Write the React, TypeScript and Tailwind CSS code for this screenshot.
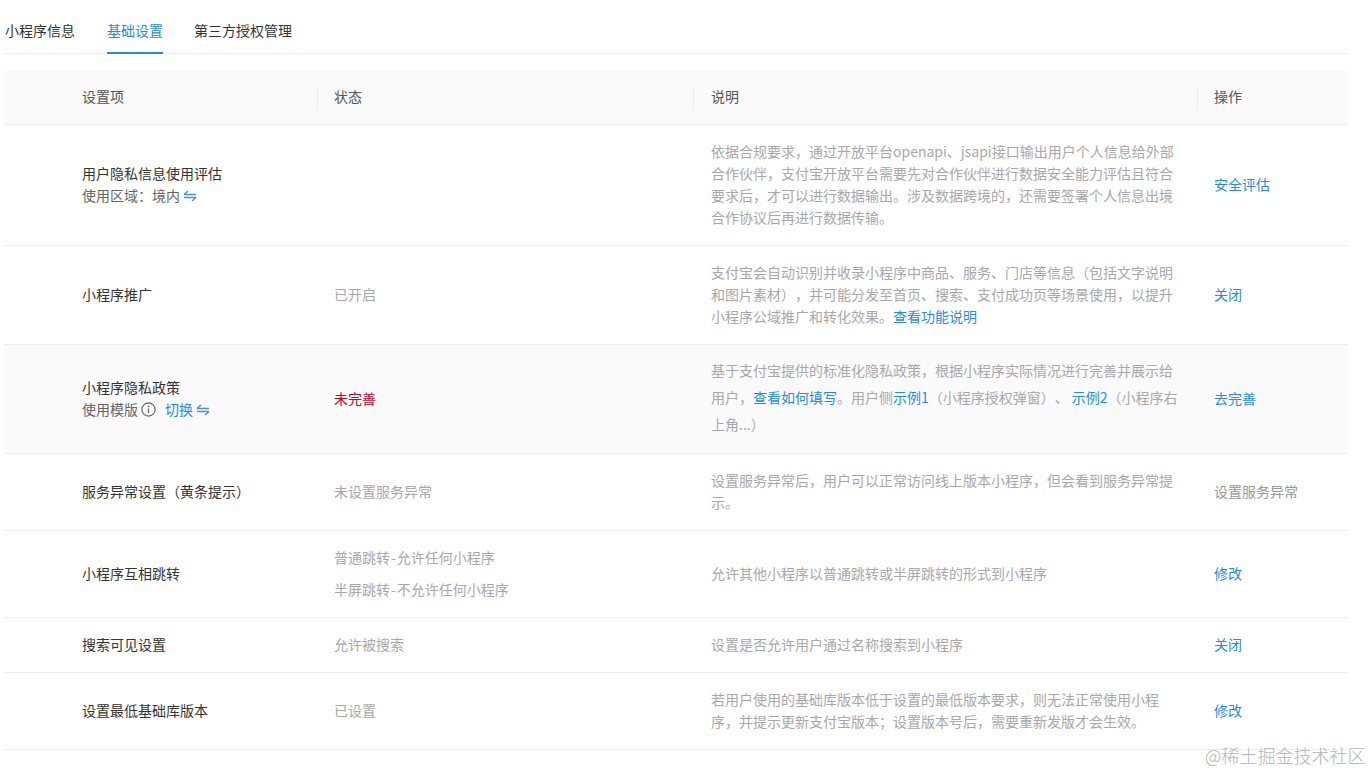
import React from "react";

function Swap() {
  return (
    <svg width="14" height="12" viewBox="0 0 14 12" fill="none" className="ml-[3px] inline-block align-[-1px]">
      <path d="M1 4.5H13M1 4.5L5 1M1 7.5H13M13 7.5L9 11" stroke="#4a90e2" strokeWidth="1.4" />
    </svg>
  );
}
function Info() {
  return (
    <svg width="15" height="15" viewBox="0 0 15 15" fill="none" className="ml-[3px] inline-block align-[-2px]">
      <circle cx="7.5" cy="7.5" r="6.6" stroke="#666" strokeWidth="1.2" />
      <path d="M7.5 6.5V11" stroke="#666" strokeWidth="1.3" />
      <circle cx="7.5" cy="4.4" r="0.9" fill="#666" />
    </svg>
  );
}
const A = ({ children }: { children: React.ReactNode }) => <span className="text-[#1f8ceb]">{children}</span>;

type Row = { h: string; bg?: boolean; name: React.ReactNode; status: React.ReactNode; desc: React.ReactNode; action: React.ReactNode };
const rows: Row[] = [
  {
    h: "h-[121px]",
    name: (
      <>
        <div className="leading-[22px] text-[#333]">用户隐私信息使用评估</div>
        <div className="leading-[22px] text-[#666]">使用区域：境内<Swap /></div>
      </>
    ),
    status: null,
    desc: "依据合规要求，通过开放平台openapi、jsapi接口输出用户个人信息给外部合作伙伴，支付宝开放平台需要先对合作伙伴进行数据安全能力评估且符合要求后，才可以进行数据输出。涉及数据跨境的，还需要签署个人信息出境合作协议后再进行数据传输。",
    action: <A>安全评估</A>,
  },
  {
    h: "h-[99px]",
    name: <span className="text-[#333]">小程序推广</span>,
    status: <span className="text-[#a8a8aa]">已开启</span>,
    desc: <>支付宝会自动识别并收录小程序中商品、服务、门店等信息（包括文字说明和图片素材），并可能分发至首页、搜索、支付成功页等场景使用，以提升小程序公域推广和转化效果。<A>查看功能说明</A></>,
    action: <A>关闭</A>,
  },
  {
    h: "h-[109px]",
    bg: true,
    name: (
      <>
        <div className="leading-[22px] text-[#333]">小程序隐私政策</div>
        <div className="leading-[22px] text-[#666]">使用模版<Info /><span className="ml-[9px] text-[#1f8ceb]">切换</span><Swap /></div>
      </>
    ),
    status: <span className="text-[#c4002b]">未完善</span>,
    desc: <div className="pb-[2px] leading-[27px]">基于支付宝提供的标准化隐私政策，根据小程序实际情况进行完善并展示给用户，<A>查看如何填写</A>。用户侧<A>示例1</A>（小程序授权弹窗）、<span className="ml-[3px]"><A>示例2</A></span>（小程序右上角...）</div>,
    action: <A>去完善</A>,
  },
  {
    h: "h-[77px]",
    name: <span className="text-[#333]">服务异常设置（黄条提示）</span>,
    status: <span className="text-[#a8a8aa]">未设置服务异常</span>,
    desc: "设置服务异常后，用户可以正常访问线上版本小程序，但会看到服务异常提示。",
    action: <span className="text-[#999]">设置服务异常</span>,
  },
  {
    h: "h-[87px]",
    name: <span className="text-[#333]">小程序互相跳转</span>,
    status: (
      <div className="flex flex-col gap-[10px] leading-[22px] text-[#a8a8aa]">
        <div>普通跳转<span className="mx-[1px]">-</span>允许任何小程序</div>
        <div>半屏跳转<span className="mx-[1px]">-</span>不允许任何小程序</div>
      </div>
    ),
    desc: "允许其他小程序以普通跳转或半屏跳转的形式到小程序",
    action: <A>修改</A>,
  },
  {
    h: "h-[55px]",
    name: <span className="text-[#333]">搜索可见设置</span>,
    status: <span className="text-[#a8a8aa]">允许被搜索</span>,
    desc: "设置是否允许用户通过名称搜索到小程序",
    action: <A>关闭</A>,
  },
  {
    h: "h-[77px]",
    name: <span className="text-[#333]">设置最低基础库版本</span>,
    status: <span className="text-[#a8a8aa]">已设置</span>,
    desc: "若用户使用的基础库版本低于设置的最低版本要求，则无法正常使用小程序，并提示更新支付宝版本；设置版本号后，需要重新发版才会生效。",
    action: <A>修改</A>,
  },
];

export default function App() {
  return (
    <div className="relative h-[771px] w-[1371px] overflow-hidden bg-white pl-[4px] pr-[23px] text-[14px] font-['Noto_Sans_CJK_SC',sans-serif] [text-spacing-trim:space-all]">
      <div className="flex h-[54px] gap-[32px] border-b border-[#eeeeee] pl-[1px] pt-[19px]">
        <div className="leading-[22px] text-[#333]">小程序信息</div>
        <div className="mr-[-1px] h-[35px] border-b-2 border-[#1f8ceb] leading-[22px] text-[#1f8ceb]">基础设置</div>
        <div className="leading-[22px] text-[#333]">第三方授权管理</div>
      </div>
      <div className="mt-[17px] grid h-[54px] grid-cols-[313px_376px_504px_151px] items-center border-b border-[#eeeeee] bg-[#fafafa] text-[#555]">
        <div className="pb-[4px] pl-[78px] leading-[22px]">设置项</div>
        <div className="border-l border-[#eeeeee] pb-[4px] pl-[16px] leading-[22px]">状态</div>
        <div className="border-l border-[#eeeeee] pb-[4px] pl-[17px] leading-[22px]">说明</div>
        <div className="border-l border-[#eeeeee] pb-[4px] pl-[16px] leading-[22px]">操作</div>
      </div>
      {rows.map((r, i) => (
        <div
          key={i}
          className={`grid grid-cols-[313px_376px_504px_151px] items-center border-b border-[#eeeeee] ${r.h} ${r.bg ? "bg-[#fafafa]" : ""}`}
        >
          <div className="pb-[2px] pl-[78px]">{r.name}</div>
          <div className="pb-[2px] pl-[17px]">{r.status}</div>
          <div className="pb-[2px] pl-[18px] pr-[16px] leading-[22px] text-[#a8a8aa]">{r.desc}</div>
          <div className="pb-[2px] pl-[17px]">{r.action}</div>
        </div>
      ))}
      <div className="absolute left-[1205px] top-[743px] text-[18px] font-light leading-[24px] text-[#b5b5b5]">@稀土掘金技术社区</div>
    </div>
  );
}
